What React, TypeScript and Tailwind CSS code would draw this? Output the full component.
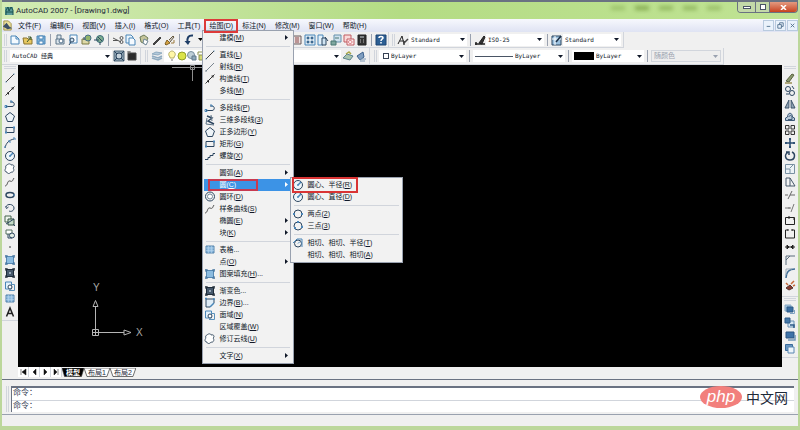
import React from 'react';
import clsx from 'clsx';

const INK = '#2d4660';
const BLUE = '#4a86b8';
const PALE = '#cfe3f2';

// All glyphs are drawn on a 12x12 grid
const glyphs: Record<string, React.ReactNode> = {
  new: <path d="M2 2h5l3 3v5H2zM7 2v3h3" fill="#f4faff" stroke={BLUE} />,
  open: <><path d="M1 4h4l1 1h4v5H2z" fill="#e8c860" stroke="#8a7430" /><path d="M5 8l4-5M6 3h3v3" stroke="#3d5b2d" /></>,
  save: <><path d="M2 2h8v8H2z" fill="#7fb2d6" stroke={BLUE} /><path d="M4 2h4v3H4zM4 7h4v3H4z" fill="#fff" stroke={BLUE} /></>,
  print: <><path d="M3 5V1h4v4M2 5h8v5H2z" fill="#dbe5ec" stroke="#5d7488" /><circle cx="7" cy="7" r="2" fill="#fff" stroke="#4c6a86" /></>,
  preview: <><path d="M3 1h7v8H3z" fill="#f7fbff" stroke={BLUE} /><circle cx="5" cy="6" r="2" fill={PALE} stroke={INK} /><path d="M4 8l-2 3" stroke={INK} /></>,
  publish: <><path d="M2 5h7v5H2z" fill="#ddd9a8" stroke="#7a7a45" /><circle cx="8" cy="4" r="3" fill="#92b36b" stroke="#46708a" /><path d="M4 3v3" stroke={INK} /></>,
  globe: <><circle cx="7" cy="5" r="3.5" fill="#7fae8f" stroke="#3b6d7a" /><path d="M1 6h5M7 8v3M5 3l4 4" stroke={INK} /></>,
  cut: <><path d="M1 4l8 4M1 6.500h5" stroke="#555" /><circle cx="9.500" cy="4" r="1.500" stroke="#555" /><circle cx="9.500" cy="8" r="1.500" stroke="#555" /></>,
  copy: <><path d="M1 1h5l2 2v6H1z" fill="#e9f4fc" stroke={BLUE} /><path d="M4 4h4l2 2v5H4z" fill="#f5faff" stroke={BLUE} /></>,
  paste: <><path d="M2 3l4-2 4 3-3 6-4-2z" fill="#c5c59b" stroke="#6d7c5a" /><path d="M6 5l4 2-2 4-3-2z" fill="#fff" stroke="#6f8796" /></>,
  match: <path d="M2 10l3-3 4-4 1 1-4 4-3 3z" fill="#444" stroke="#444" />,
  brush: <><path d="M1 10l2-4 3 3-4 2z" fill="#d6a343" stroke="#7e5f22" /><path d="M5 6l4-4 1 1-4 5" fill="#ccc" stroke="#665a40" /><path d="M7 9h3V6" stroke="#9a7a3e" /></>,
  undo: <><path d="M10 1.500C5 1 4 4 4.500 8" stroke="#1e3d66" strokeWidth="2" /><path d="M1.500 7L5 11l2.500-4z" fill="#1e3d66" /></>,
  redo: <path d="M2 1c6 0 6 4 5 8M5 7l2 4 3-4z" stroke="#8b98a8" strokeWidth="1.5" />,
  pan: <path d="M6 1v10M1 6h10M4 3l2-2 2 2M4 9l2 2 2-2" stroke={INK} />,
  zoomIn: <><circle cx="5" cy="5" r="3.5" fill="#eef6fc" stroke={INK} /><path d="M8 8l3 3M3 5h4M5 3v4" stroke={INK} /></>,
  palette: <><path d="M2 2h8v8H2z" fill="#e9dede" stroke="#6b5c5c" /><path d="M4 4h4M4 6h4M4 8h4" stroke="#8c4a4a" /></>,
  center: <><path d="M1 1h10v10H1z" fill="#dcecf8" stroke={BLUE} /><path d="M3 3h2v2H3zM7 3h2v2H7zM3 7h2v2H3zM7 7h2v2H7z" fill={BLUE} stroke={INK} strokeWidth=".5" /></>,
  tools: <><path d="M1 1h5v10H1z" fill="#e3f0fa" stroke={BLUE} /><path d="M5 4h4v7H5z" fill={PALE} stroke={INK} /><path d="M8 3l3 4" stroke={INK} /></>,
  sheet: <><path d="M4 1h7v7H4z" fill="#d0e2ee" stroke="#6590ac" /><path d="M1 7h5v4H1zM5 4h4" fill="#7fa79f" stroke="#4b7773" /></>,
  markup: <><path d="M1 1h7v7H1z" fill="#f9dada" stroke="#c15c63" /><path d="M4 5h7v6H4z" fill="#fff0f0" stroke="#c15c63" /><path d="M5 8c1-2 4-2 4 0s-3 2-4 0z" stroke="#d8737a" /></>,
  calc: <><path d="M2 1h8v10H2z" fill="#333" stroke="#222" /><path d="M4 3h4" stroke="#cfd8dc" /><path d="M4 6h1M7 6h1M4 8h1M7 8h1" stroke="#bbb" /></>,
  help: <><path d="M1 1h10v10H1z" fill="#2c5f94" stroke="#1d4573" /><path d="M4 4c0-2 4-2 4 0 0 1-2 1-2 3M6 8v1.500" stroke="#fff" strokeWidth="1.500" /></>,
  gear: <><path d="M1 1h10v10H1z" fill="#8aa0b0" stroke="#51697b" /><circle cx="6" cy="6" r="3" fill="#c5d2db" stroke={INK} /><path d="M1 1l3 3M11 1L8 4M1 11l3-3M11 11L8 8" stroke={INK} /></>,
  workspace: <><path d="M2 3h8v7H2z" fill="#2b2b2b" stroke="#444" /><path d="M1 2h4M3 1v3" stroke="#666" /></>,
  layers: <><path d="M1 4l4-2 6 1-4 2z" fill="#b2c9da" stroke="#8fabc0" /><path d="M1 6l6 2 4-2M1 8l6 2 4-2" stroke="#8fabc0" strokeWidth="1.500" /></>,
  bulb: <><path d="M4 7C1 4 4 1 6 1s5 3 2 6v1H4z" fill="#fff7a8" stroke="#b5ae6a" /><path d="M5 10h2" stroke="#777" /></>,
  sun: <circle cx="6" cy="6" r="4" fill="#dbe34a" stroke="#93a02b" />,
  freeze: <><circle cx="5" cy="5" r="3.5" fill="#bfcfd8" stroke="#7890a0" /><path d="M6 6h4v4H6z" fill="#90a9ba" stroke="#60798b" /></>,
  lock: <><path d="M2 5V2h5v3" stroke="#8b9150" /><path d="M3 5h7v5H3z" fill="#d5d976" stroke="#8b9150" /></>,
  layerPrev: <><path d="M1 8l4-4 6 2-3 4z" fill="#a9c4ad" stroke="#5c8390" /><path d="M4 4l3-2 2 2" stroke="#a9a642" strokeWidth="1.500" /></>,
  layerState: <><path d="M2 6l6-4 1 5-4 3z" fill="#7f9ec0" stroke="#3c618c" /><path d="M4 9h7M5 11h5" stroke="#7c98b5" /></>,
  textStyle: <><path d="M1 10L5 2l2 8M3 7h4" stroke="#222" /><path d="M7 9l4-4M7 7v4" stroke="#444" strokeWidth="1.500" /></>,
  dimStyle: <><path d="M1 10h10M2 8v3" stroke="#222" strokeWidth="1.500" /><path d="M5 9l5-7 1 1-3 7z" fill="#333" stroke="#222" /></>,
  tableStyle: <><path d="M1 2h9v9H1z" fill="#9ac0de" stroke={INK} /><path d="M1 5h9M4 2v9" stroke="#fff" /><path d="M5 8l5-6" stroke="#1c2f45" strokeWidth="1.500" /></>,
  line: <><path d="M2 10l8-8" stroke="#444" /><path d="M1.500 9.500h1v1h-1zM9.500 1.500h1v1h-1z" fill={BLUE} /></>,
  ray: <path d="M2 10l8-8M2 9v2" stroke="#7b8791" />,
  xline: <><path d="M1.500 10.500l9-9" stroke="#333" /><path d="M3 8h1.500v1.500M7.500 3H9v1.500" stroke="#222" /></>,
  pline: <><path d="M2 8.500h6c3 0 3-4.500 0-4.500H6" stroke={INK} /><path d="M1 7.500h2v2H1zM6 3h2v2" stroke={BLUE} /></>,
  poly3d: <><path d="M3 2l5 2-4 3 6 3" stroke={INK} strokeWidth="1.500" /><path d="M3 4l-1 6 8 1M7 1l1 6" stroke="#596f82" /></>,
  polygon: <path d="M6 1.500l4.500 3.500-2 5.500h-5L1.500 5z" fill="#eef4f8" stroke={INK} />,
  rect: <><path d="M2 3.500h8v5H2z" stroke={INK} /><path d="M1 8.500h2M9 3.500h2" stroke={BLUE} strokeWidth="2" /></>,
  helix: <path d="M1 9.500h3v-2h2v-2h3v-2h2" stroke={INK} />,
  arc: <><path d="M1 11C2 6 5 3 10 2" stroke={INK} /><path d="M1 9v2M4 4h2v2M9 1h2v2" stroke={BLUE} /></>,
  circle: <><circle cx="6" cy="6" r="4.500" fill="#eef5fa" stroke={INK} /><path d="M6 6l3-3M5 6h2" stroke={BLUE} strokeWidth="1.500" /></>,
  donut: <><circle cx="6" cy="5.500" r="4.500" stroke={INK} /><circle cx="6" cy="5.500" r="2.500" fill="#fff" stroke="#71879a" /></>,
  ring2: <><circle cx="6" cy="6" r="4" stroke={INK} /><path d="M1 6h2M9 6h2" stroke={BLUE} strokeWidth="2" /></>,
  ring3: <><circle cx="6" cy="6" r="4" stroke={INK} /><path d="M5 2h2M2 8h2M9 7h2" stroke={BLUE} strokeWidth="2" /></>,
  tangent: <><circle cx="6" cy="6.500" r="3.500" stroke={INK} /><path d="M1 6l4-4h5v8M6 6.500l2-2" stroke={BLUE} /></>,
  cloud: <path d="M3 2c2-2 4-1 4 0 3-1 4 2 2 3 2 2 0 5-2 4-1 2-4 2-4 0-3 0-2-3-1-4-1-1 0-3 1-3z" fill="#fff" stroke="#42566a" />,
  spline: <path d="M1 10c3 0 2-6 5-5s2 0 4-3" stroke="#555" />,
  ellipse: <><ellipse cx="6" cy="6" rx="4" ry="2.500" stroke={INK} strokeWidth="1.500" /><path d="M10 5v2" stroke={BLUE} /></>,
  ellipseArc: <path d="M2 5c1-4 8-3 8 1 0 3-3 4-5 3M1.500 4.500l1 2 2-1.500" stroke={INK} />,
  insert: <><path d="M1 1h6v6H1z" fill="#eef5ee" stroke="#47644c" /><path d="M4 4h6v6H4z" fill="#c4dbc8" stroke="#334e41" /><path d="M2 9l8-5M9 9l2 2" stroke={INK} /></>,
  block: <><path d="M2 2h6v4H2z" fill="#fff" stroke="#55715e" /><circle cx="8" cy="7.500" r="2.500" fill="#e4eee5" stroke={INK} /><path d="M4 6v4h4" stroke={INK} /></>,
  point: <path d="M5.500 5.500h1v1h-1z" fill="#444" stroke="#555" strokeWidth=".5" />,
  hatch: <><path d="M2.500 2.500h7v7h-7z" fill="#8cbce0" stroke="#5688b3" /><path d="M1 2h3M2 1v3M8 2h3M10 1v3M1 10h3M2 8v3M8 10h3M10 8v3" stroke="#3f719c" /></>,
  gradient: <><path d="M2.500 2.500h7v7h-7z" fill="#46586b" stroke="#1f2d3b" /><path d="M1 2h3M2 1v3M8 2h3M10 1v3M1 10h3M2 8v3M8 10h3M10 8v3" stroke="#1c2835" /><path d="M5 5h2v2H5z" fill="#9aabba" /></>,
  boundary: <><path d="M2 2h8v4l-4 4H2z" fill="#e0edf7" stroke={INK} /><path d="M1 1.500h2M9 2h2M6 10l4-4" stroke={BLUE} strokeWidth="1.500" /></>,
  region: <><path d="M1.500 2h6v7h-6z" fill="#e2f0fa" stroke={BLUE} /><circle cx="6" cy="7" r="2" fill="#fff" stroke={INK} /><path d="M7 4.500h3.500v6H5" stroke="#5a90ba" /></>,
  table: <><path d="M2 2h8v7H2z" fill="#8bb9df" stroke="#5483ab" /><path d="M2 4h8M2 6.500h8M4.500 2v7M7.500 2v7" stroke="#bcd8ef" strokeWidth=".5" /></>,
  mtext: <path d="M2.500 10.500L6 2l3.500 8.500M4 7.500h4" stroke="#222" strokeWidth="1.500" />,
  erase: <><path d="M2 9l6-7 2 1-5 7z" fill="#8b9a6f" stroke="#59613f" /><path d="M1 11h7" stroke="#9a8f56" strokeWidth="1.500" /></>,
  copyObj: <><circle cx="4" cy="4" r="2.500" stroke={INK} /><circle cx="8" cy="8" r="2.500" stroke={INK} /><path d="M2 9h3M8 1l2 3" stroke={INK} /></>,
  mirror: <><path d="M5 2v8H1zM7 2v8h4z" fill="#91a5b7" stroke="#3d5368" /><path d="M6 1v10" stroke="#fff" strokeWidth=".5" /></>,
  offset: <><path d="M1.500 9.500V7l2-1c0-5 5-5 5 0l2 1v2.500z" fill="#b9c9d8" stroke="#3d5977" /><path d="M4 8.500h4V6c0-2-3-2-3 0" stroke="#3d5977" /></>,
  array: <path d="M1.500 1.500h3.500v3.500h-3.500zM7 1.500h3.500v3.500H7zM1.500 7h3.500v3.500h-3.500zM7 7h3.500v3.500H7z" fill="#eee" stroke="#333" />,
  move: <path d="M6 1v10M1 6h10M5 2h2M5 10h2M2 5v2M10 5v2" stroke="#24486e" strokeWidth="1.500" />,
  rotate: <path d="M4 2c-4 3-3 8 2 8 5 0 6-6 2-8M2 2h3v3" stroke={INK} strokeWidth="1.500" />,
  scale: <><path d="M1.500 1.500h9v9h-9z" fill="#edf3f7" stroke="#7890a2" /><path d="M1.500 6h4.500v4.500M6 5l3-3" stroke="#7890a2" /></>,
  stretch: <path d="M2 2h4v8H2zM6 2l5 8H6" fill="#f4f4f4" stroke="#46596b" />,
  trim: <path d="M1 6h3M6 6h5M8 2L4 10" stroke="#666" />,
  extend: <path d="M1 6h6M10 2L7 10M5 5v2" stroke="#777" />,
  breakPt: <path d="M1.500 2.500h9v7h-9zM5 1v3M9 4h2" stroke="#222" />,
  breakGap: <path d="M4 2H1.500v8h9V2H8M4 1v2M8 1v2" stroke="#222" />,
  join: <path d="M1 6h10M5 6L3 4v4zM7 6l2-2v4z" fill="#222" stroke="#222" />,
  chamfer: <path d="M2 11V6l4-4h5M2 6V2h4" stroke="#5b6c7c" />,
  fillet: <><path d="M2 11c0-6 3-9 9-9" stroke="#3e6c95" strokeWidth="1.500" /><path d="M2 8V2h6" stroke="#9aa9b7" /></>,
  explode: <><path d="M2 8l4-3 3 3-4 2z" fill="#8a3a2e" stroke="#54332e" /><path d="M7 4l3-3M2 3l2 2M9 6l2-1" stroke="#c76a3c" strokeWidth="1.500" /></>,
  front: <><path d="M1 1h6v6H1z" fill="#9dc0dc" stroke="#8aabc6" /><path d="M3 3h6v5H3z" fill="#3a6fa3" stroke="#2d5a88" /><path d="M6 9.500h4.500V6" stroke="#7fa3c2" /></>,
  back: <><path d="M4 4h6v6H4z" fill="#dbe9f4" stroke="#6991b4" /><path d="M1 1h5v5H1z" fill="#4478a8" stroke="#2d5a88" /><path d="M6 8h4v3" stroke="#2d5a88" strokeWidth="1.500" /></>,
  above: <><path d="M2 2h8v6H2z" fill="#3e73a8" stroke="#2b5580" /><path d="M4 10h7V5" stroke="#7297b7" strokeWidth="1.500" /></>,
  under: <><path d="M1.500 1.500h7v6h-7z" fill="#6695c1" stroke="#3a6b9b" /><path d="M4 4h6v6H4z" fill="#eef5fb" stroke="#5986b0" /></>,
};

function Icon({ name, className }: { name: string; className?: string }) {
  return (
    <svg viewBox="0 0 12 12" fill="none" aria-hidden="true" className={clsx('size-3 shrink-0', className)}>
      {glyphs[name]}
    </svg>
  );
}

const ToolButton = ({ name }: { name: string }) => (
  <button aria-label={name} className="flex size-3 shrink-0 items-center justify-center hover:bg-sky-100">
    <Icon name={name} />
  </button>
);

const Chevron = () => (
  <svg viewBox="0 0 5 3" aria-hidden="true" className="pointer-events-none h-[3px] w-[5px] shrink-0">
    <path d="M0 0h5L2.500 3z" fill="currentColor" />
  </svg>
);

const Divider = () => <span className="mx-[3px] h-3 w-px shrink-0 bg-gray-400" />;

const Grip = () => <span className="mx-0.5 h-3 w-[3px] shrink-0 border-x border-gray-300" />;

const FlatGrip = () => <span className="mb-0.5 h-[3px] w-3 shrink-0 border-y border-gray-300" />;

interface ComboProps {
  label: string;
  value: string;
  className: string;
  disabled?: boolean;
  children?: React.ReactNode;
}

function Combo({ label, value, className, disabled, children }: ComboProps) {
  return (
    <label
      className={clsx(
        'flex h-3 shrink-0 items-center px-0.5',
        disabled ? 'border border-gray-300 bg-[#eeeeee] text-gray-400' : 'bg-white text-gray-900',
        className
      )}
    >
      {children}
      <select
        aria-label={label}
        disabled={disabled}
        className={clsx(
          "h-3 min-w-0 flex-1 appearance-none bg-transparent font-['DejaVu_Sans_Mono','Noto_Sans_CJK_SC',monospace] leading-[12px] outline-none",
          disabled ? 'text-[7px]' : 'text-[6px]'
        )}
      >
        <option>{value}</option>
      </select>
      <Chevron />
    </label>
  );
}

const standardTools = [
  ['new', 'open', 'save'],
  ['print', 'preview', 'publish', 'globe'],
  ['cut', 'copy', 'paste', 'match', 'brush'],
];

const drawTools = [
  'line', 'xline', 'pline', 'polygon', 'rect', 'arc', 'circle', 'cloud', 'spline', 'ellipse',
  'ellipseArc', 'insert', 'block', 'point', 'hatch', 'gradient', 'region', 'table', 'mtext',
];

const modifyTools = [
  'erase', 'copyObj', 'mirror', 'offset', 'array', 'move', 'rotate', 'scale', 'stretch',
  'trim', 'extend', 'breakPt', 'breakGap', 'join', 'chamfer', 'fillet', 'explode',
];

const orderTools = ['front', 'back', 'above', 'under'];

interface Entry {
  text: string;
  hotkey?: string;
  icon?: string;
  more?: boolean;
  dots?: boolean;
}

const drawMenu: Entry[][] = [
  [{ text: '建模', hotkey: 'M', more: true }],
  [
    { text: '直线', hotkey: 'L', icon: 'line' },
    { text: '射线', hotkey: 'R', icon: 'ray' },
    { text: '构造线', hotkey: 'T', icon: 'xline' },
    { text: '多线', hotkey: 'M' },
  ],
  [
    { text: '多段线', hotkey: 'P', icon: 'pline' },
    { text: '三维多段线', hotkey: '3', icon: 'poly3d' },
    { text: '正多边形', hotkey: 'Y', icon: 'polygon' },
    { text: '矩形', hotkey: 'G', icon: 'rect' },
    { text: '螺旋', hotkey: 'X', icon: 'helix' },
  ],
  [
    { text: '圆弧', hotkey: 'A', more: true },
    { text: '圆', hotkey: 'C', more: true },
    { text: '圆环', hotkey: 'D', icon: 'donut' },
    { text: '样条曲线', hotkey: 'S', icon: 'spline' },
    { text: '椭圆', hotkey: 'E', more: true },
    { text: '块', hotkey: 'K', more: true },
  ],
  [
    { text: '表格', icon: 'table', dots: true },
    { text: '点', hotkey: 'O', more: true },
    { text: '图案填充', hotkey: 'H', icon: 'hatch', dots: true },
  ],
  [
    { text: '渐变色', icon: 'gradient', dots: true },
    { text: '边界', hotkey: 'B', icon: 'boundary', dots: true },
    { text: '面域', hotkey: 'N', icon: 'region' },
    { text: '区域覆盖', hotkey: 'W' },
    { text: '修订云线', hotkey: 'U', icon: 'cloud' },
  ],
  [{ text: '文字', hotkey: 'X', more: true }],
];

const circleMenu: Entry[][] = [
  [
    { text: '圆心、半径', hotkey: 'R', icon: 'circle' },
    { text: '圆心、直径', hotkey: 'D', icon: 'circle' },
  ],
  [
    { text: '两点', hotkey: '2', icon: 'ring2' },
    { text: '三点', hotkey: '3', icon: 'ring3' },
  ],
  [
    { text: '相切、相切、半径', hotkey: 'T', icon: 'tangent' },
    { text: '相切、相切、相切', hotkey: 'A' },
  ],
];

function MenuRow({ entry, active }: { entry: Entry; active?: boolean }) {
  return (
    <button
      role="menuitem"
      className={clsx(
        'flex h-3 w-full items-center gap-[3px] pr-1 text-left whitespace-nowrap',
        active ? 'bg-[#3c93e6] text-white' : 'text-gray-900 hover:bg-sky-100'
      )}
    >
      {entry.icon ? <Icon name={entry.icon} /> : <span className="w-3 shrink-0" />}
      <span className="flex-1">
        {entry.text}
        {entry.hotkey && <>(<u>{entry.hotkey}</u>)</>}
        {entry.dots && '...'}
      </span>
      {entry.more && (
        <svg viewBox="0 0 3 5" aria-hidden="true" className="h-[5px] w-[3px]">
          <path d="M0 0v5l3-2.500z" fill="currentColor" />
        </svg>
      )}
    </button>
  );
}

function MenuPanel({ groups, className, children }: {
  groups: Entry[][];
  className: string;
  children?: (entry: Entry) => React.ReactNode;
}) {
  return (
    <div role="menu" className={clsx('absolute z-20 border border-gray-400 bg-[#f2f2f2] p-px', className)}>
      {groups.map((group, i) => (
        <React.Fragment key={i}>
          {i > 0 && <div className="mx-0.5 my-0.5 h-px bg-gray-300" />}
          {group.map((entry) => (
            <div key={entry.text} className="relative">
              <MenuRow entry={entry} active={entry.text === '圆'} />
              {children?.(entry)}
            </div>
          ))}
        </React.Fragment>
      ))}
    </div>
  );
}

const menus = [
  ['文件', 'F'], ['编辑', 'E'], ['视图', 'V'], ['插入', 'I'], ['格式', 'O'], ['工具', 'T'],
  ['绘图', 'D'], ['标注', 'N'], ['修改', 'M'], ['窗口', 'W'], ['帮助', 'H'],
];

function TitleBar() {
  return (
    <header className="flex h-[19px] items-start border-t-2 border-gray-500 bg-linear-to-r from-[#d3ebb4] via-[#b4dc84] to-[#c0e394] pl-0.5">
      <h1 className="flex h-full items-center font-[Roboto,'Noto_Sans',sans-serif] text-[8px] text-gray-800">
        <svg viewBox="0 0 10 10" aria-hidden="true" className="size-[10px]">
          <path d="M1 1h8v8H1z" fill="#5b9a98" />
          <path d="M2 9V4l2-3 1 4 2-4 2 3v5M2 6h7" stroke="#17504f" fill="none" />
        </svg>
        <span className="pl-0.5">AutoCAD 2007 - [Drawing1.dwg]</span>
      </h1>
      {/* Frosted shapes showing through the glass frame */}
      <div className="mr-4 ml-auto flex h-3 items-center gap-2.5 blur-[2px]">
        <span className="h-1 w-3.5 bg-lime-800/25" />
        <span className="h-1 w-3.5 bg-lime-800/45" />
        <span className="h-1 w-3.5 bg-lime-800/35" />
        <span className="h-1 w-3.5 bg-lime-800/35" />
        <span className="h-1 w-3.5 bg-lime-800/30" />
      </div>
      <div className="flex h-[11px] overflow-hidden rounded-b-sm border border-t-0 border-gray-500">
        <button aria-label="最小化" className="flex w-[18px] items-center justify-center border-r border-gray-500 bg-[#c3d9a8]">
          <span className="h-[3px] w-2 border border-gray-600 bg-white" />
        </button>
        <button aria-label="最大化" className="flex w-[14px] items-center justify-center border-r border-gray-500 bg-[#c3d9a8]">
          <span className="size-[6px] border border-gray-600 bg-white" />
        </button>
        <button aria-label="关闭" className="flex w-[27px] items-center justify-center bg-linear-to-b from-[#e39a80] to-[#c7401c]">
          <svg viewBox="0 0 7 5" className="h-[5px] w-[7px]"><path d="M1 0l5 5M6 0L1 5" stroke="#fff" strokeWidth="1.500" /></svg>
        </button>
      </div>
    </header>
  );
}

function MenuBar() {
  return (
    <nav className="flex h-[13px] items-center gap-px bg-linear-to-b from-[#f7f8fd] to-[#dfe3f3] text-[7px] leading-[12px]">
      <svg viewBox="0 0 12 12" aria-hidden="true" className="size-[11px] shrink-0">
        <path d="M2 1h5l3 3v7H2z" fill="#eadf9c" stroke="#a09045" />
        <path d="M1 7l4-4 3 4 3 2-5 1z" fill="#3d5168" />
      </svg>
      {menus.map(([text, key]) => (
        <div key={key} className="relative">
          <button className="px-1 whitespace-nowrap text-gray-900">{text}({key})</button>
          {key === 'D' && (
            <>
              <span className="pointer-events-none absolute -inset-x-px -inset-y-px z-30 border-2 border-[#dc3a3a]" />
              <MenuPanel groups={drawMenu} className="top-full -left-[3px] -mt-0.5 w-[92px]">
                {(entry) =>
                  entry.text === '圆' && (
                    <>
                      <span className="pointer-events-none absolute inset-y-0 left-1 z-10 w-[50px] border-2 border-[#c83a50]" />
                      <MenuPanel groups={circleMenu} className="-top-0.5 left-[86px] w-[113px]">
                        {(sub) =>
                          sub.hotkey === 'R' && (
                            <span className="pointer-events-none absolute -inset-y-0.5 left-0 z-10 w-[66px] border-2 border-[#d93434]" />
                          )
                        }
                      </MenuPanel>
                    </>
                  )
                }
              </MenuPanel>
            </>
          )}
        </div>
      ))}
      <div className="ml-auto flex h-[11px] gap-px">
        {['M3 6h4', 'M2 4h4v4H2zM4 4V2h4v4H6', 'M3 3l4 4M7 3l-4 4'].map((d) => (
          <button key={d} aria-label="文档窗口" className="w-[11px] border border-[#b9cbdf] bg-[#eaf2fb]">
            <svg viewBox="0 0 10 10" className="size-[9px]"><path d={d} fill="none" stroke="#51708f" /></svg>
          </button>
        ))}
      </div>
    </nav>
  );
}

function StandardRow() {
  return (
    <div className="flex h-4 items-center">
      <div className="flex h-full items-center border-r border-b border-gray-300 pr-px">
        <Grip />
        {standardTools.map((group, i) => (
          <React.Fragment key={i}>
            {i > 0 && <Divider />}
            <div className="flex gap-px">{group.map((name) => <ToolButton key={name} name={name} />)}</div>
          </React.Fragment>
        ))}
        <Divider />
        <div className="flex items-center gap-px">
          <ToolButton name="undo" />
          <button aria-label="放弃列表" className="flex w-2 justify-center"><Chevron /></button>
          <ToolButton name="redo" />
          <button aria-label="重做列表" className="flex w-2 justify-center"><Chevron /></button>
        </div>
        <Divider />
        <div className="flex gap-px">
          <ToolButton name="pan" />
          <ToolButton name="zoomIn" />
          <ToolButton name="preview" />
          <ToolButton name="rotate" />
        </div>
        <Divider />
        <div className="flex gap-px">
          {['palette', 'center', 'tools', 'sheet', 'markup', 'calc'].map((name) => <ToolButton key={name} name={name} />)}
        </div>
        <Divider />
        <ToolButton name="help" />
      </div>
      <div className="flex h-full items-center border-r border-b border-gray-300 pr-0.5 pl-px">
        <Grip />
        <ToolButton name="textStyle" />
        <Combo label="文字样式" value="Standard" className="w-[58px]" />
        <Divider />
        <ToolButton name="dimStyle" />
        <Combo label="标注样式" value="ISO-25" className="w-[58px]" />
        <Divider />
        <ToolButton name="tableStyle" />
        <Combo label="表格样式" value="Standard" className="w-[58px]" />
      </div>
    </div>
  );
}

function LayerRow() {
  return (
    <div className="flex h-[17px] items-center">
      <div className="flex h-full items-center gap-px border-r border-b border-gray-300 pr-0.5">
        <Grip />
        <Combo label="工作空间" value="AutoCAD 经典" className="w-[102px]" />
        <ToolButton name="gear" />
        <ToolButton name="workspace" />
      </div>
      <div className="flex h-full items-center gap-px border-r border-b border-gray-300 pr-0.5 pl-0.5">
        <Grip />
        <ToolButton name="layers" />
        <Combo label="图层" value="0" className="w-[177px]">
          <Icon name="bulb" className="-mr-0.5" />
          <Icon name="sun" className="-mr-0.5" />
          <Icon name="freeze" className="-mr-0.5" />
          <Icon name="lock" />
        </Combo>
        <ToolButton name="layerPrev" />
        <ToolButton name="layerState" />
      </div>
      <div className="flex h-full items-center border-r border-b border-gray-300 pr-0.5 pl-0.5">
        <Grip />
        <Combo label="颜色" value="ByLayer" className="w-[87px]">
          <span className="mx-0.5 size-[6px] border border-gray-700" />
        </Combo>
        <Divider />
        <Combo label="线型" value="ByLayer" className="w-[92px]">
          <span className="mr-0.5 h-px w-[38px] bg-gray-600" />
        </Combo>
        <Divider />
        <Combo label="线宽" value="ByLayer" className="w-[72px]">
          <span className="mr-0.5 h-2 w-[20px] bg-black" />
        </Combo>
        <Divider />
        <Combo label="打印样式" value="随颜色" className="w-[70px]" disabled />
      </div>
    </div>
  );
}

function DrawingArea() {
  return (
    <main className="relative min-w-0 flex-1 bg-black">
      <svg viewBox="0 0 36 16" aria-hidden="true" className="absolute top-0 left-[154px] h-4 w-9">
        <path d="M0 2.500h36M20.500 2v14M18.500 .5h4v4h-4z" fill="none" stroke="#8d8d8d" />
      </svg>
      <svg viewBox="0 0 70 60" aria-hidden="true" className="absolute bottom-[25px] left-[70px] h-[60px] w-[70px] font-['Liberation_Sans',sans-serif]">
        <g fill="none" stroke="#b5b5b5">
          <path d="M4.500 47.500h6v6h-6zM7.500 53V25M5 50.500h31M7.500 18.500l2.500 6H5zM43 50.500l-7-2.500v5z" />
        </g>
        <text x="5" y="9" fontSize="10" fill="#a8a8a8">Y</text>
        <text x="48" y="54" fontSize="10" fill="#a8a8a8">X</text>
      </svg>
    </main>
  );
}

function LayoutTabs() {
  return (
    <div className="flex h-[10px] items-center text-[7px] leading-[9px]">
      <div className="flex bg-white">
        {['M3 2v6M8 2v6L4 5z', 'M7 2v6L4 5z', 'M4 2v6l3-3z', 'M7 2v6M3 2v6l3-3z'].map((d) => (
          <button key={d} aria-label="切换布局" className="border-r border-gray-300">
            <svg viewBox="0 0 10 10" className="size-[10px]"><path d={d} fill="#111" stroke="#111" strokeWidth=".5" /></svg>
          </button>
        ))}
      </div>
      {['模型', '布局1', '布局2'].map((tab, i) => (
        <button key={tab} className="relative h-[9px] px-1 whitespace-nowrap">
          {/* Tabs lean outwards on both sides */}
          <svg viewBox="0 0 26 9" preserveAspectRatio="none" aria-hidden="true" className="absolute inset-0 size-full">
            <path d="M0 0l3 8.500h20L26 0z" fill={i === 0 ? '#000' : '#fff'} stroke="#333" strokeWidth=".7" />
          </svg>
          <span className={clsx('relative', i === 0 ? 'font-bold text-white' : 'text-gray-800')}>{tab}</span>
        </button>
      ))}
    </div>
  );
}

function CommandLine() {
  return (
    <section className="flex border-t border-gray-500 bg-[#f0f0f0] pt-1.5 pr-1 pb-0.5 pl-1">
      <span className="mr-0.5 w-[3px] border-x border-gray-300" />
      <div className="flex-1 border-t-2 border-l border-gray-500 bg-white font-['Liberation_Mono','Noto_Sans_CJK_SC',monospace] text-[8px] leading-[10px] text-gray-700">
        <p className="h-3 pl-px">命令：</p>
        <label className="flex h-3 border-t border-gray-300 pl-px">
          命令：
          <input aria-label="命令" className="min-w-0 flex-1 bg-transparent outline-none" />
        </label>
      </div>
    </section>
  );
}

const Watermark = () => (
  <div className="absolute right-[10px] bottom-[18px] z-30 flex items-center gap-1">
    <span className="flex h-[22px] w-[42px] items-center justify-center rounded-[50%] bg-[#f27f7c] pb-0.5 font-['Liberation_Sans',sans-serif] text-[17px] leading-none text-white italic">
      php
    </span>
    <span className="font-['Noto_Sans_CJK_SC',sans-serif] text-[14px] leading-[22px] text-gray-800">中文网</span>
  </div>
);

export default function App() {
  return (
    <div className="relative flex min-h-screen flex-col border-x-2 border-b-4 border-[#bcd79b] bg-[#f0f0f0] font-['Liberation_Sans','Noto_Sans_CJK_SC',sans-serif]">
      <TitleBar />
      <MenuBar />
      <StandardRow />
      <LayerRow />
      <div className="flex flex-1">
        <aside className="w-4 shrink-0">
          <div className="flex flex-col items-center gap-px border-b border-gray-300 pt-px pb-0.5">
            <FlatGrip />
            {drawTools.map((name) => <ToolButton key={name} name={name} />)}
          </div>
        </aside>
        <div className="flex min-w-0 flex-1 flex-col">
          <DrawingArea />
          <LayoutTabs />
        </div>
        <aside className="w-4 shrink-0">
          <div className="flex flex-col items-center gap-px border-b border-gray-300 pt-px pb-1">
            <FlatGrip />
            {modifyTools.map((name) => <ToolButton key={name} name={name} />)}
          </div>
          <div className="flex flex-col items-center gap-px border-b border-gray-300 pt-px pb-0.5">
            <FlatGrip />
            {orderTools.map((name) => <ToolButton key={name} name={name} />)}
          </div>
        </aside>
      </div>
      <div className="h-0.5" />
      <CommandLine />
      <footer className="h-3 border-t border-gray-400" />
      <Watermark />
    </div>
  );
}
